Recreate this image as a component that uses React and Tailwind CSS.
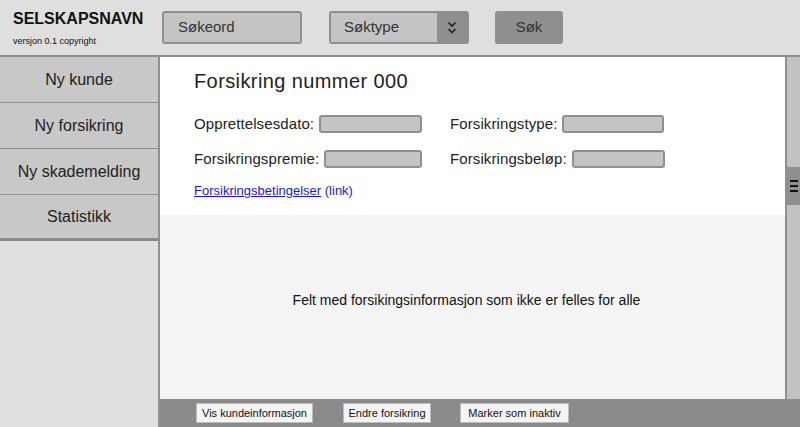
import React from 'react';

const font = { fontFamily: '"Liberation Sans", Arial, sans-serif' };

const NavItem = ({ label, last }) => (
  <div
    className={`h-[46px] flex items-center justify-center text-[16px] text-[#222] bg-[#c8c8c8] border-b ${
      last ? 'border-b-[3px] border-[#8a8a8a]' : 'border-[#8f8f8f]'
    }`}
  >
    {label}
  </div>
);

const Field = ({ label, width }) => (
  <div className="flex items-center gap-[5px]">
    <span className="text-[15px] tracking-[0.1px] text-[#222]">{label}</span>
    <div className={`${width} h-[18px] bg-[#c4c4c4] border-2 border-[#8f8f8f] rounded-[3px]`} />
  </div>
);

const FooterButton = ({ label, width }) => (
  <button className={`${width} h-[20px] bg-[#f4f4f4] border border-[#bdbdbd] text-[11px] text-[#111]`}>
    {label}
  </button>
);

export default function App() {
  return (
    <div className="w-[800px] h-[427px] flex flex-col bg-[#dfdfdf] overflow-hidden" style={font}>
      {/* header */}
      <div className="h-[57px] shrink-0 flex items-center border-b-2 border-[#8f8f8f]">
        <div className="w-[162px] pl-[13px] pt-[2px]">
          <div className="text-[16px] font-bold text-[#111] leading-none">SELSKAPSNAVN</div>
          <div className="text-[9px] text-[#111] mt-[10px] leading-none">versjon 0.1 copyright</div>
        </div>
        <div className="w-[140px] h-[33px] bg-[#c4c4c4] border-2 border-[#8f8f8f] rounded-[3px] flex items-center pl-[14px] text-[15px] text-[#333]">
          Søkeord
        </div>
        <div className="ml-[27px] w-[140px] h-[33px] bg-[#c4c4c4] border-2 border-[#8f8f8f] rounded-[3px] flex items-center">
          <span className="flex-1 pl-[13px] text-[15px] text-[#333]">Søktype</span>
          <div className="w-[30px] h-full bg-[#8f8f8f] flex items-center justify-center">
            <svg width="10" height="14" viewBox="0 0 10 14" fill="none" stroke="#222" strokeWidth="1.6">
              <path d="M1.5 1.5 L5 5 L8.5 1.5" />
              <path d="M1.5 8 L5 11.5 L8.5 8" />
            </svg>
          </div>
        </div>
        <button className="ml-[26px] w-[68px] h-[33px] bg-[#8f8f8f] rounded-[3px] text-[15px] text-[#333]">Søk</button>
      </div>

      <div className="flex-1 flex min-h-0">
        {/* sidebar */}
        <div className="w-[158px] shrink-0 bg-[#dfdfdf]">
          <NavItem label="Ny kunde" />
          <NavItem label="Ny forsikring" />
          <NavItem label="Ny skademelding" />
          <NavItem label="Statistikk" last />
        </div>

        <div className="flex-1 flex flex-col border-l-2 border-[#8f8f8f]">
          <div className="flex-1 flex min-h-0">
            {/* content */}
            <div className="flex-1 flex flex-col">
              <div className="h-[158px] bg-white pl-[34px] pt-[12px]">
                <h1 className="text-[20px] tracking-[0.4px] text-[#222] leading-[24px]">Forsikring nummer 000</h1>
                <div className="mt-[20px] flex flex-col gap-[12px]">
                  <div className="flex">
                    <div className="w-[256px]"><Field label="Opprettelsesdato:" width="w-[103px]" /></div>
                    <Field label="Forsikringstype:" width="w-[102px]" />
                  </div>
                  <div className="flex">
                    <div className="w-[256px]"><Field label="Forsikringspremie:" width="w-[98px]" /></div>
                    <Field label="Forsikringsbeløp:" width="w-[93px]" />
                  </div>
                </div>
                <div className="mt-[11px] text-[13px] text-[#1a1acc]">
                  <span className="underline">Forsikringsbetingelser</span> (link)
                </div>
              </div>
              <div className="flex-1 bg-[#f4f4f4] flex items-center justify-center pb-[14px] pr-[12px]">
                <span className="text-[14px] text-[#111]">Felt med forsikingsinformasjon som ikke er felles for alle</span>
              </div>
            </div>
            {/* scrollbar */}
            <div className="w-[15px] shrink-0 bg-[#c2c2c2] border-l-2 border-[#8f8f8f] flex flex-col">
              <div className="h-[110px]" />
              <div className="h-[38px] bg-[#8f8f8f] flex flex-col items-center justify-center gap-[3px]">
                <div className="w-[8px] h-[2px] bg-[#111]" />
                <div className="w-[8px] h-[2px] bg-[#111]" />
                <div className="w-[8px] h-[2px] bg-[#111]" />
              </div>
            </div>
          </div>
          {/* footer */}
          <div className="h-[28px] shrink-0 bg-[#8a8a8a] flex items-center pl-[36px]">
            <FooterButton label="Vis kundeinformasjon" width="w-[117px]" />
            <div className="w-[30px]" />
            <FooterButton label="Endre forsikring" width="w-[88px]" />
            <div className="w-[29px]" />
            <FooterButton label="Marker som inaktiv" width="w-[109px]" />
          </div>
        </div>
      </div>
    </div>
  );
}
